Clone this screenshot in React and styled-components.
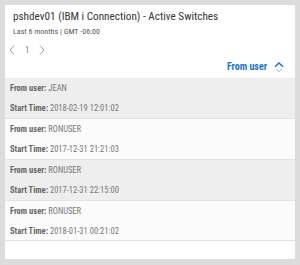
import styled, { createGlobalStyle } from "styled-components";

const GlobalStyle = createGlobalStyle`
  html, body {
    margin: 0;
    padding: 0;
    background: #dcdcdc;
  }
  body {
    font-family: Roboto, "Liberation Sans", sans-serif;
    font-stretch: 75%;
  }
`;

const rows = [
  { user: "JEAN", time: "2018-02-19 12:01:02" },
  { user: "RONUSER", time: "2017-12-31 21:21:03" },
  { user: "RONUSER", time: "2017-12-31 22:15:00" },
  { user: "RONUSER", time: "2018-01-31 00:21:02" },
];

const App = () => {
  return (
    <>
      <GlobalStyle />
      <Page>
        <Card>
          <Header>
            <Title>pshdev01 (IBM i Connection) - Active Switches</Title>
            <Subtitle>Last 6 months | GMT -06:00</Subtitle>
            <Pager>
              <PagerArrow viewBox="0 0 6 10">
                <path d="M5 0.5 L1 5 L5 9.5" />
              </PagerArrow>
              <PageNum>1</PageNum>
              <PagerArrow viewBox="0 0 6 10">
                <path d="M1 0.5 L5 5 L1 9.5" />
              </PagerArrow>
            </Pager>
          </Header>
          <SortBar>
            <SortLabel>From user</SortLabel>
            <SortIcon viewBox="0 0 10 11">
              <path d="M1 4.8 L5 1 L9 4.8" stroke="#1b74c9" strokeWidth="1.5" />
              <path d="M2 7 L5 9.8 L8 7" stroke="#bcbcbc" strokeWidth="1" />
            </SortIcon>
          </SortBar>
          <List>
            {rows.map((r, i) => (
              <Row key={i} $alt={i % 2 === 0}>
                <Line>
                  <Label>From user:</Label> {r.user}
                </Line>
                <Line>
                  <Label>Start Time:</Label> {r.time}
                </Line>
              </Row>
            ))}
          </List>
        </Card>
      </Page>
    </>
  );
};

const Page = styled.div`
  width: 300px;
  height: 265px;
  padding: 5px;
  box-sizing: border-box;
`;

const Card = styled.div`
  width: 290px;
  height: 254px;
  background: #ffffff;
  display: flex;
  flex-direction: column;
`;

const Header = styled.div`
  padding: 4px 8px 0 8px;
  display: flex;
  flex-direction: column;
`;

const Title = styled.div`
  font-size: 11.2px;
  color: #353535;
  line-height: 16px;
  white-space: nowrap;
`;

const Subtitle = styled.div`
  font-size: 8px;
  color: #555555;
  line-height: 9px;
  margin-top: 2px;
`;

const Pager = styled.div`
  display: flex;
  align-items: center;
  gap: 10px;
  margin: 9px 0 0 -4px;
  height: 10px;
`;

const PagerArrow = styled.svg`
  width: 6px;
  height: 10px;
  fill: none;
  stroke: #9a9a9a;
  stroke-width: 1;
`;

const PageNum = styled.span`
  font-size: 9px;
  line-height: 10px;
  color: #888888;
`;

const SortBar = styled.div`
  display: flex;
  justify-content: flex-end;
  align-items: center;
  gap: 7px;
  padding: 0 11px 0 0;
  margin-top: 6px;
  height: 12px;
`;

const SortLabel = styled.span`
  font-size: 10px;
  line-height: 12px;
  font-weight: bold;
  color: #1b74c9;
`;

const SortIcon = styled.svg`
  width: 10px;
  height: 11px;
  fill: none;
`;

const List = styled.div`
  margin-top: 5px;
  display: flex;
  flex-direction: column;
`;

const Row = styled.div`
  height: 41px;
  box-sizing: border-box;
  padding: 5px 5px 0 5px;
  background: ${(p) => (p.$alt ? "#eeeeee" : "#fbfbfb")};
  border-bottom: 1px solid #e3e3e3;
  display: flex;
  flex-direction: column;
  gap: 10px;
  &:last-child {
    height: 40px;
  }
`;

const Line = styled.div`
  font-size: 8.5px;
  line-height: 10px;
  color: #777777;
`;

const Label = styled.span`
  font-weight: bold;
  color: #666666;
`;

export default App;
